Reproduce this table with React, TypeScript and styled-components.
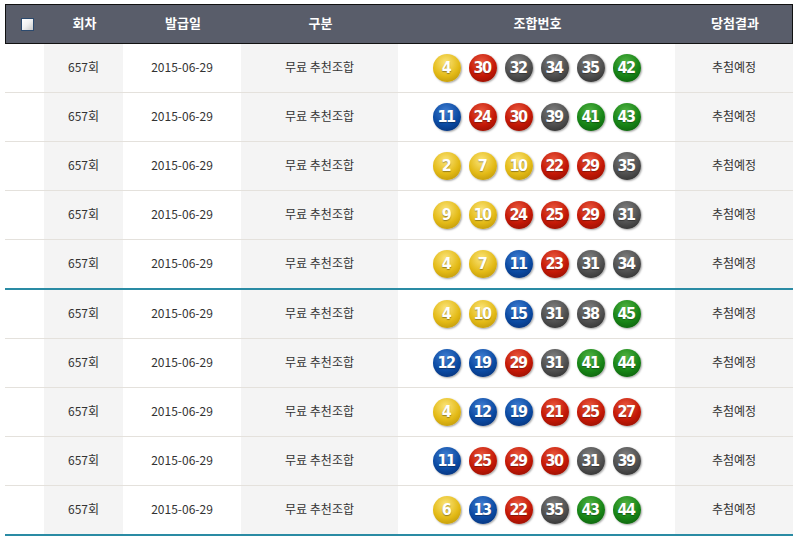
import React from "react";
import styled, { createGlobalStyle } from "styled-components";

const GlobalStyle = createGlobalStyle`
  html, body {
    margin: 0;
    padding: 0;
    background: #fff;
  }
  body {
    font-family: "Noto Sans CJK KR", "Noto Sans", sans-serif;
  }
`

const COLS = "39px 79px 118px 157px 277px 118px"

const rows = [
  [4, 30, 32, 34, 35, 42],
  [11, 24, 30, 39, 41, 43],
  [2, 7, 10, 22, 29, 35],
  [9, 10, 24, 25, 29, 31],
  [4, 7, 11, 23, 31, 34],
  [4, 10, 15, 31, 38, 45],
  [12, 19, 29, 31, 41, 44],
  [4, 12, 19, 21, 25, 27],
  [11, 25, 29, 30, 31, 39],
  [6, 13, 22, 35, 43, 44],
]

const palette: Record<string, [string, string, string]> = {
  yellow: ["#fbe47a", "#e3ba16", "#b08a06"],
  blue: ["#3f7ed2", "#0b4aa2", "#05296a"],
  red: ["#ea5a40", "#c41806", "#820c01"],
  gray: ["#808080", "#4f4f4f", "#262626"],
  green: ["#52b444", "#178416", "#0a520a"],
}

function ballColor(n: number) {
  if (n <= 10) return "yellow"
  if (n <= 20) return "blue"
  if (n <= 30) return "red"
  if (n <= 40) return "gray"
  return "green"
}

export default function App() {
  return <Page>
    <GlobalStyle />
    <Table>
      <Head>
        <HeadCell><CheckBox /></HeadCell>
        <HeadCell>회차</HeadCell>
        <HeadCell>발급일</HeadCell>
        <HeadCell>구분</HeadCell>
        <HeadCell>조합번호</HeadCell>
        <HeadCell>당첨결과</HeadCell>
      </Head>
      {rows.map((nums, i) => (
        <Row key={i} $groupEnd={i % 5 === 4}>
          <Cell />
          <Cell $shade>657회</Cell>
          <Cell>2015-06-29</Cell>
          <Cell $shade>무료 추천조합</Cell>
          <Cell>
            <Balls>
              {nums.map((n) => <Ball key={n} $tone={ballColor(n)}>{n}</Ball>)}
            </Balls>
          </Cell>
          <Cell $shade>추첨예정</Cell>
        </Row>
      ))}
    </Table>
  </Page>
}

const Page = styled.div`
  padding: 4px 0 0 5px;
`
const Table = styled.div`
  width: 788px;
`
const Head = styled.div`
  display: grid;
  grid-template-columns: ${COLS};
  height: 40px;
  box-sizing: border-box;
  border: 1px solid #111;
  background: #595d6a;
`
const HeadCell = styled.div`
  display: flex;
  align-items: center;
  justify-content: center;
  color: #fff;
  font-size: 13px;
  font-weight: 700;
  padding-bottom: 4px;
`
const CheckBox = styled.span`
  display: block;
  width: 11px;
  height: 11px;
  margin: 4px 0 0 4px;
  border: 1px solid #2c4a6e;
  background: linear-gradient(135deg, #ffffff 0%, #f0f0f0 50%, #c8c8c8 100%);
`
const Row = styled.div<{ $groupEnd?: boolean }>`
  display: grid;
  grid-template-columns: ${COLS};
  height: 48px;
  border-bottom: ${p => p.$groupEnd ? "2px solid #2a8ba4" : "1px solid #e4e1dc"};
`
const Cell = styled.div<{ $shade?: boolean }>`
  display: flex;
  align-items: center;
  justify-content: center;
  padding-bottom: 3px;
  background: ${p => p.$shade ? "#f4f4f4" : "#fff"};
  color: #333;
  font-size: 12px;
`
const Balls = styled.div`
  display: flex;
  gap: 8px;
  margin-top: 2px;
`
const Ball = styled.span<{ $tone: string }>`
  width: 28px;
  height: 28px;
  border-radius: 50%;
  display: flex;
  align-items: center;
  justify-content: center;
  color: #fff;
  font-family: "DejaVu Sans Condensed", "DejaVu Sans", sans-serif;
  font-stretch: condensed;
  font-weight: 700;
  font-size: 16px;
  letter-spacing: -1.5px;
  text-indent: -1px;
  text-shadow: 0 1px 1px rgba(0,0,0,0.35);
  background: ${p => {
    const [hi, mid, lo] = palette[p.$tone]
    return `radial-gradient(circle at 45% 30%, ${hi} 0%, ${mid} 55%, ${lo} 100%)`
  }};
  box-shadow: 1px 1px 2px rgba(0,0,0,0.35);
`
